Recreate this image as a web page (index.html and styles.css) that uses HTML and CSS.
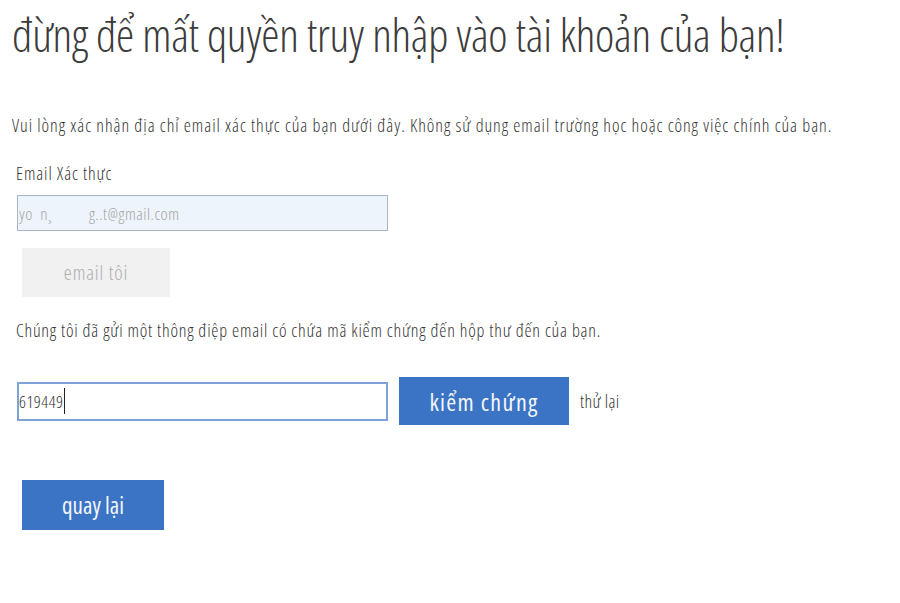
FILE: index.html
```html
<!DOCTYPE html>
<html lang="vi">
<head>
<meta charset="utf-8">
<title>Xác thực email</title>
<link rel="stylesheet" href="styles.css">
</head>
<body>
<main class="page">
  <h1 class="title">đừng để mất quyền truy nhập vào tài khoản của bạn!</h1>
  <p class="intro">Vui lòng xác nhận địa chỉ email xác thực của bạn dưới đây. Không sử dụng email trường học hoặc công việc chính của bạn.</p>
  <label class="label" for="email">Email Xác thực</label>
  <div class="field email-field" id="email">yo&nbsp;&nbsp;n¸&nbsp;&nbsp;&nbsp;&nbsp;&nbsp;&nbsp;&nbsp;&nbsp;&nbsp;&nbsp;g..t@gmail.com</div>
  <div class="btn btn-disabled">email tôi</div>
  <p class="sent">Chúng tôi đã gửi một thông điệp email có chứa mã kiểm chứng đến hộp thư đến của bạn.</p>
  <div class="verify-row">
    <div class="field code-field"><span class="code">619449</span><span class="caret"></span></div>
    <div class="btn btn-primary btn-verify">kiểm chứng</div>
    <span class="retry">thử lại</span>
  </div>
  <div class="btn btn-primary btn-back">quay lại</div>
</main>
</body>
</html>
```

FILE: styles.css
```css
html, body {
  margin: 0;
  padding: 0;
  background: #ffffff;
}
body {
  font-family: "Open Sans", "Noto Sans", sans-serif;
  font-stretch: 75%;
  font-weight: 300;
  color: #363636;
}
.page {
  display: flex;
  flex-direction: column;
  align-items: flex-start;
  padding: 0 0 0 12px;
}
.title {
  margin: 4px 0 0 0;
  font-size: 46px;
  font-weight: 300;
  line-height: 60px;
  color: #3c3c3c;
  letter-spacing: -0.3px;
}
.intro {
  margin: 50px 0 0 0;
  font-size: 18px;
  line-height: 22px;
  letter-spacing: 0.95px;
}
.label {
  margin: 26px 0 0 4px;
  font-size: 18px;
  line-height: 22px;
  letter-spacing: 0.9px;
}
.field {
  box-sizing: border-box;
  width: 371px;
  display: flex;
  align-items: center;
  font-size: 17px;
  letter-spacing: 0.5px;
}
.email-field {
  margin: 11px 0 0 5px;
  height: 36px;
  background: #eef4fb;
  border: 1px solid #a9b4c4;
  color: #a6a6a6;
  padding-left: 1px;
  white-space: pre;
}
.btn {
  box-sizing: border-box;
  display: flex;
  align-items: center;
  justify-content: center;
}
.btn-disabled {
  margin: 17px 0 0 10px;
  width: 148px;
  height: 49px;
  background: #f1f1f1;
  color: #adadad;
  font-size: 20px;
  letter-spacing: 0.9px;
}
.sent {
  margin: 22px 0 0 4px;
  font-size: 18px;
  line-height: 22px;
  letter-spacing: 0.78px;
}
.verify-row {
  display: flex;
  align-items: center;
  margin: 36px 0 0 5px;
}
.code-field {
  height: 39px;
  background: #fff;
  border: 2px solid #7fa3d8;
  color: #333;
  padding-left: 0;
}
.caret {
  display: inline-block;
  width: 1px;
  height: 26px;
  background: #222;
}
.btn-primary {
  background: #3b74c4;
  color: #f3f6fb;
  font-weight: 400;
}
.btn-verify {
  margin-left: 11px;
  width: 170px;
  height: 48px;
  font-size: 24px;
  letter-spacing: 1.3px;
}
.retry {
  margin-left: 11px;
  font-size: 18px;
  letter-spacing: 0.4px;
}
.btn-back {
  margin: 55px 0 0 10px;
  width: 142px;
  height: 50px;
  font-size: 23px;
}
```
